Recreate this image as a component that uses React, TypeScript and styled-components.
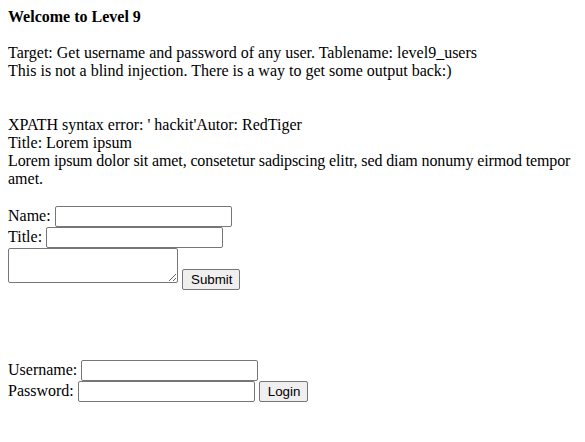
import React from "react";
import styled, { createGlobalStyle } from "styled-components";

const Global = createGlobalStyle`
  html, body { margin: 0; padding: 0; background: #fff; }
  html { overflow: hidden; }
  body {
    margin: 8px;
    font-family: "Liberation Serif", "Times New Roman", serif;
    font-size: 16px;
    color: #000;
  }
`;

const Page = styled.div`
  line-height: normal;
  padding-bottom: 30px;
`;

const Heading = styled.b`
  font-weight: bold;
`;

const NoWrap = styled.span`
  white-space: nowrap;
  letter-spacing: -0.12px;
`;

const Form = styled.form<{ $gapAfter?: number }>`
  margin: 0 0 ${(p) => p.$gapAfter ?? 0}px 0;
`;

const TextInput = styled.input`
  font: 13.333px "Liberation Sans", Arial, sans-serif;
  width: 169px;
  height: 15px;
  padding: 2px 3px;
  border: 1px solid #767676;
  border-radius: 2px;
  margin: 0;
  box-sizing: content-box;
  vertical-align: baseline;
  background: #fff;
`;

const Area = styled.textarea`
  font: 13.333px "Liberation Mono", "DejaVu Sans Mono", monospace;
  width: 164px;
  height: 29px;
  padding: 2px;
  border: 1px solid #767676;
  border-radius: 2px;
  margin: 0;
  box-sizing: content-box;
  vertical-align: baseline;
  resize: both;
`;

const Button = styled.button<{ $drop?: number }>`
  font: 13.333px "Liberation Sans", Arial, sans-serif;
  padding: 1px 7px 1px 8px;
  height: 21px;
  border: 1px solid #767676;
  border-radius: 2px;
  background: #efefef;
  color: #000;
  margin: 0 0 0 4px;
  vertical-align: ${(p) => (p.$drop ? `-${p.$drop}px` : "baseline")};
`;

export default function App() {
  return (
    <>
      <Global />
      <Page>
        <Heading>Welcome to Level 9</Heading>
        <br />
        <br />
        Target: Get username and password of any user. Tablename: level9_users
        <br />
        This is not a blind injection. There is a way to get some output back:)
        <br />
        <br />
        <br />
        XPATH syntax error: ' hackit'Autor: RedTiger
        <br />
        Title: Lorem ipsum
        <br />
        <NoWrap>Lorem ipsum dolor sit amet, consetetur sadipscing elitr, sed diam nonumy eirmod tempor</NoWrap>
        <br />
        amet.
        <br />
        <br />
        <Form $gapAfter={70} onSubmit={(e) => e.preventDefault()}>
          Name: <TextInput type="text" />
          <br />
          Title: <TextInput type="text" />
          <br />
          <Area />
          <Button type="submit" $drop={1}>Submit</Button>
        </Form>
        <Form onSubmit={(e) => e.preventDefault()}>
          Username: <TextInput type="text" />
          <br />
          Password: <TextInput type="password" />
          <Button type="submit">Login</Button>
        </Form>
      </Page>
    </>
  );
}
